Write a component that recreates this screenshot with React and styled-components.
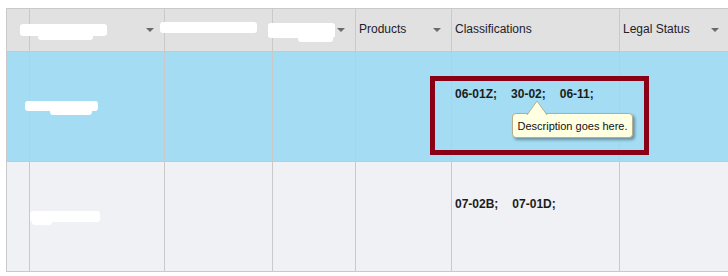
import React from 'react'
import styled, { createGlobalStyle } from 'styled-components'

const GlobalStyle = createGlobalStyle`
  body {
    margin: 0;
    background: #ffffff;
    overflow: hidden;
    font-family: "Liberation Sans", Arial, sans-serif;
  }
`

const Page = styled.div`
  position: relative;
  width: 728px;
  height: 276px;
  overflow: hidden;
  padding: 8px 0 0 6px;
  box-sizing: border-box;
`

const Grid = styled.div`
  display: grid;
  grid-template-columns: 23px 135px 108px 83px 96px 168px 109px;
  grid-template-rows: 43px 110px 110px;
  width: 722px;
  border-top: 1px solid #c9c9c9;
  border-left: 1px solid #c9c9c9;

  & > div:nth-child(7n) {
    border-right: none;
  }
`

const HeadCell = styled.div`
  box-sizing: border-box;
  background: #e1e1e1;
  border-right: 1px solid #c9c9c9;
  border-bottom: 1px solid #c9c9c9;
  display: flex;
  align-items: center;
  justify-content: space-between;
  padding: 0 10px 2px 3px;
  font-size: 12px;
  color: #22202a;
`

const Arrow = styled.span`
  width: 0;
  height: 0;
  border-left: 4px solid transparent;
  border-right: 4px solid transparent;
  border-top: 4px solid #6a6a6a;
  margin-top: 2px;
`

const Cell = styled.div`
  box-sizing: border-box;
  background: ${p => (p.$selected ? '#a3dcf3' : '#f0f1f5')};
  border-right: 1px solid #c9c9c9;
  border-bottom: 1px solid #c9c9c9;
  padding: 35px 0 0 3px;
`

const Codes = styled.div`
  display: flex;
  gap: 14px;
  font-size: 12px;
  font-weight: bold;
  color: #1c1c1c;
`

const Highlight = styled.div`
  position: absolute;
  left: 430px;
  top: 76px;
  width: 219px;
  height: 79px;
  box-sizing: border-box;
  border: 5px solid #8a0016;
`

const Tooltip = styled.div`
  position: absolute;
  left: 512px;
  top: 113px;
  width: 121px;
  height: 25px;
  box-sizing: border-box;
  background: #ffffe1;
  border: 1px solid #b8ae8c;
  border-radius: 4px;
  box-shadow: 2px 2px 3px rgba(0, 0, 0, 0.35);
  font-size: 11px;
  color: #111;
  display: flex;
  align-items: center;
  justify-content: center;
`

const TipArrow = styled.svg`
  position: absolute;
  left: 13px;
  top: -14px;
`

const Redact = styled.div`
  position: absolute;
  background: #ffffff;
  border-radius: 3px;
`

const headers = ['', '', '', '', 'Products', 'Classifications', 'Legal Status']
const arrows = [false, true, false, true, true, false, true]

const rows = [
  { selected: true, codes: ['06-01Z;', '30-02;', '06-11;'] },
  { selected: false, codes: ['07-02B;', '07-01D;'] },
]

const blobs = [
  { l: 20, t: 24, w: 87, h: 12 },
  { l: 38, t: 34, w: 55, h: 6 },
  { l: 160, t: 22, w: 97, h: 11 },
  { l: 268, t: 23, w: 67, h: 15 },
  { l: 298, t: 36, w: 35, h: 6 },
  { l: 25, t: 101, w: 73, h: 10 },
  { l: 50, t: 108, w: 42, h: 7 },
  { l: 30, t: 211, w: 70, h: 11 },
  { l: 32, t: 219, w: 20, h: 6 },
]

export default function App() {
  return (
    <Page>
      <GlobalStyle />
      <Grid>
        {headers.map((h, i) => (
          <HeadCell key={'h' + i}>
            <span>{h}</span>
            {arrows[i] && <Arrow />}
          </HeadCell>
        ))}
        {rows.map((r, ri) =>
          headers.map((_, ci) => (
            <Cell key={ri + '-' + ci} $selected={r.selected}>
              {ci === 5 && (
                <Codes>
                  {r.codes.map(c => (
                    <span key={c}>{c}</span>
                  ))}
                </Codes>
              )}
            </Cell>
          ))
        )}
      </Grid>

      {blobs.map((b, i) => (
        <Redact key={i} style={{ left: b.l, top: b.t, width: b.w, height: b.h }} />
      ))}

      <Highlight />
      <Tooltip>
        <TipArrow width="22" height="15" viewBox="0 0 22 15">
          <path d="M1 15 L11 1 L21 15" fill="#ffffe1" stroke="#b8ae8c" strokeWidth="1" />
        </TipArrow>
        Description goes here.
      </Tooltip>
    </Page>
  )
}
